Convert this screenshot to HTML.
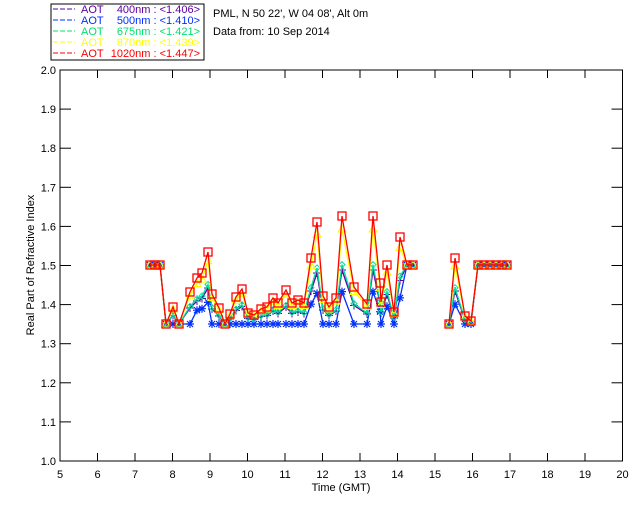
<!DOCTYPE html>
<html><head><meta charset="utf-8"><style>
body{margin:0;background:#fff;width:640px;height:512px;overflow:hidden}
svg{display:block;font-family:"Liberation Sans",sans-serif}
</style></head><body>
<svg id="s" width="640" height="512" xmlns="http://www.w3.org/2000/svg">
<rect x="51" y="4" width="153" height="56" fill="#fff" stroke="#000" stroke-width="1"/>
<g font-size="11">
<line x1="53" y1="9" x2="75" y2="9" stroke="#6000a0" stroke-dasharray="5,2"/><text x="81" y="13" fill="#6000a0">AOT</text><text x="200" y="13" text-anchor="end" fill="#6000a0">400nm : &lt;1.406&gt;</text>
<line x1="53" y1="20" x2="75" y2="20" stroke="#0030ff" stroke-dasharray="5,2"/><text x="81" y="24" fill="#0030ff">AOT</text><text x="200" y="24" text-anchor="end" fill="#0030ff">500nm : &lt;1.410&gt;</text>
<line x1="53" y1="31" x2="75" y2="31" stroke="#00e070" stroke-dasharray="5,2"/><text x="81" y="35" fill="#00e070">AOT</text><text x="200" y="35" text-anchor="end" fill="#00e070">675nm : &lt;1.421&gt;</text>
<line x1="53" y1="42" x2="75" y2="42" stroke="#ffff00" stroke-dasharray="5,2"/><text x="81" y="46" fill="#ffff00">AOT</text><text x="200" y="46" text-anchor="end" fill="#ffff00">870nm : &lt;1.439&gt;</text>
<line x1="53" y1="53" x2="75" y2="53" stroke="#ff0000" stroke-dasharray="5,2"/><text x="81" y="57" fill="#ff0000">AOT</text><text x="200" y="57" text-anchor="end" fill="#ff0000">1020nm : &lt;1.447&gt;</text>
<text x="213" y="17" fill="#000">PML, N 50 22', W 04 08', Alt 0m</text>
<text x="213" y="35" fill="#000">Data from: 10 Sep 2014</text>
</g>
<g id="axes" stroke="#000" fill="none"></g>
<g id="labels" font-size="11" fill="#000"></g>
<g id="data"></g>
</svg>
<script>
var NS="http://www.w3.org/2000/svg";
function el(p,t,a,txt){var e=document.createElementNS(NS,t);for(var k in a)e.setAttribute(k,a[k]);if(txt!=null)e.textContent=txt;p.appendChild(e);return e;}
var ax=document.getElementById("axes"),lb=document.getElementById("labels"),dt=document.getElementById("data");
var L=60,R=622.5,T=70,B=461;
el(ax,"rect",{x:L,y:T,width:R-L,height:B-T});
for(var i=0;i<=15;i++){var x=L+37.5*i;
 el(ax,"line",{x1:x,y1:B,x2:x,y2:B-8});el(ax,"line",{x1:x,y1:T,x2:x,y2:T+8});
 el(lb,"text",{x:x,y:478,"text-anchor":"middle"},String(5+i));}
for(var j=0;j<=10;j++){var y=B-39.1*j;
 el(ax,"line",{x1:L,y1:y,x2:L+11,y2:y});el(ax,"line",{x1:R,y1:y,x2:R-11,y2:y});
 el(lb,"text",{x:56,y:y+4,"text-anchor":"end"},(1+j/10).toFixed(1));}
el(lb,"text",{x:341,y:491,"text-anchor":"middle"},"Time (GMT)");
el(lb,"text",{x:0,y:0,"text-anchor":"middle",transform:"translate(34,265) rotate(-90)"},"Real Part of Refractive Index");
var red=[[150,265],[155,265],[160,265],[166,324],[173,307],[179,324],[190,292],[197,278],[202,273],[208,252],[212,294],[219,308],[225,324],[230,314],[236,297],[242,289],[248,313],[254,315],[261,309],[267,307],[273,298],[278,303],[286,290],[292,303],[298,300],[304,303],[311,258],[317,222],[323,296],[329,307],[336,298],[342,216],[354,287],[367,304],[373,216],[380,283],[381,302],[387,265],[394,312],[400,237],[407,265],[413,265],[449,324],[455,258],[465,316],[471,321],[478,265],[484,265],[490,265],[496,265],[502,265],[507,265]];
function series(f,clamp){return red.map(function(p){
 if(p[1]==265&&(p[0]<165||p[0]>405))return [p[0],265];
 var y=p[1]+(324-p[1])*f; if(clamp&&p[1]>285)y=324; return [p[0],y];});}
var cols=[["#6000a0",0.5,false],["#0030ff",0.7,true],["#00e0a0",0.45,false],["#ffff00",0.12,false],["#ff0000",0,false]];
cols.forEach(function(c,ci){var pts=series(c[1],c[2]);
 var d=pts.map(function(p,i){var mv=(i==0||p[0]-pts[i-1][0]>30);return (mv?"M":"L")+p[0]+","+p[1];}).join("");
 el(dt,"path",{d:d,stroke:c[0],fill:"none","stroke-width":1.3});
 pts.forEach(function(p){
  if(ci==4) el(dt,"rect",{x:p[0]-4,y:p[1]-4,width:8,height:8,fill:"none",stroke:"#f00","stroke-width":1.3});
  else if(ci==1) el(dt,"path",{d:"M"+(p[0]-4)+","+p[1]+"h8M"+p[0]+","+(p[1]-4)+"v8M"+(p[0]-3)+","+(p[1]-3)+"l6,6M"+(p[0]+3)+","+(p[1]-3)+"l-6,6",stroke:c[0],"stroke-width":1.2});
  else if(ci==0) el(dt,"path",{d:"M"+(p[0]-4)+","+p[1]+"h8M"+p[0]+","+(p[1]-4)+"v8",stroke:c[0]});
  else if(ci==2) el(dt,"path",{d:"M"+p[0]+","+(p[1]-3)+"l3,3l-3,3l-3,-3z",stroke:c[0],fill:"none"});
  else el(dt,"path",{d:"M"+p[0]+","+(p[1]-4)+"l4,7h-8z",stroke:c[0],fill:"none"});
 });});
</script>
</body></html>
